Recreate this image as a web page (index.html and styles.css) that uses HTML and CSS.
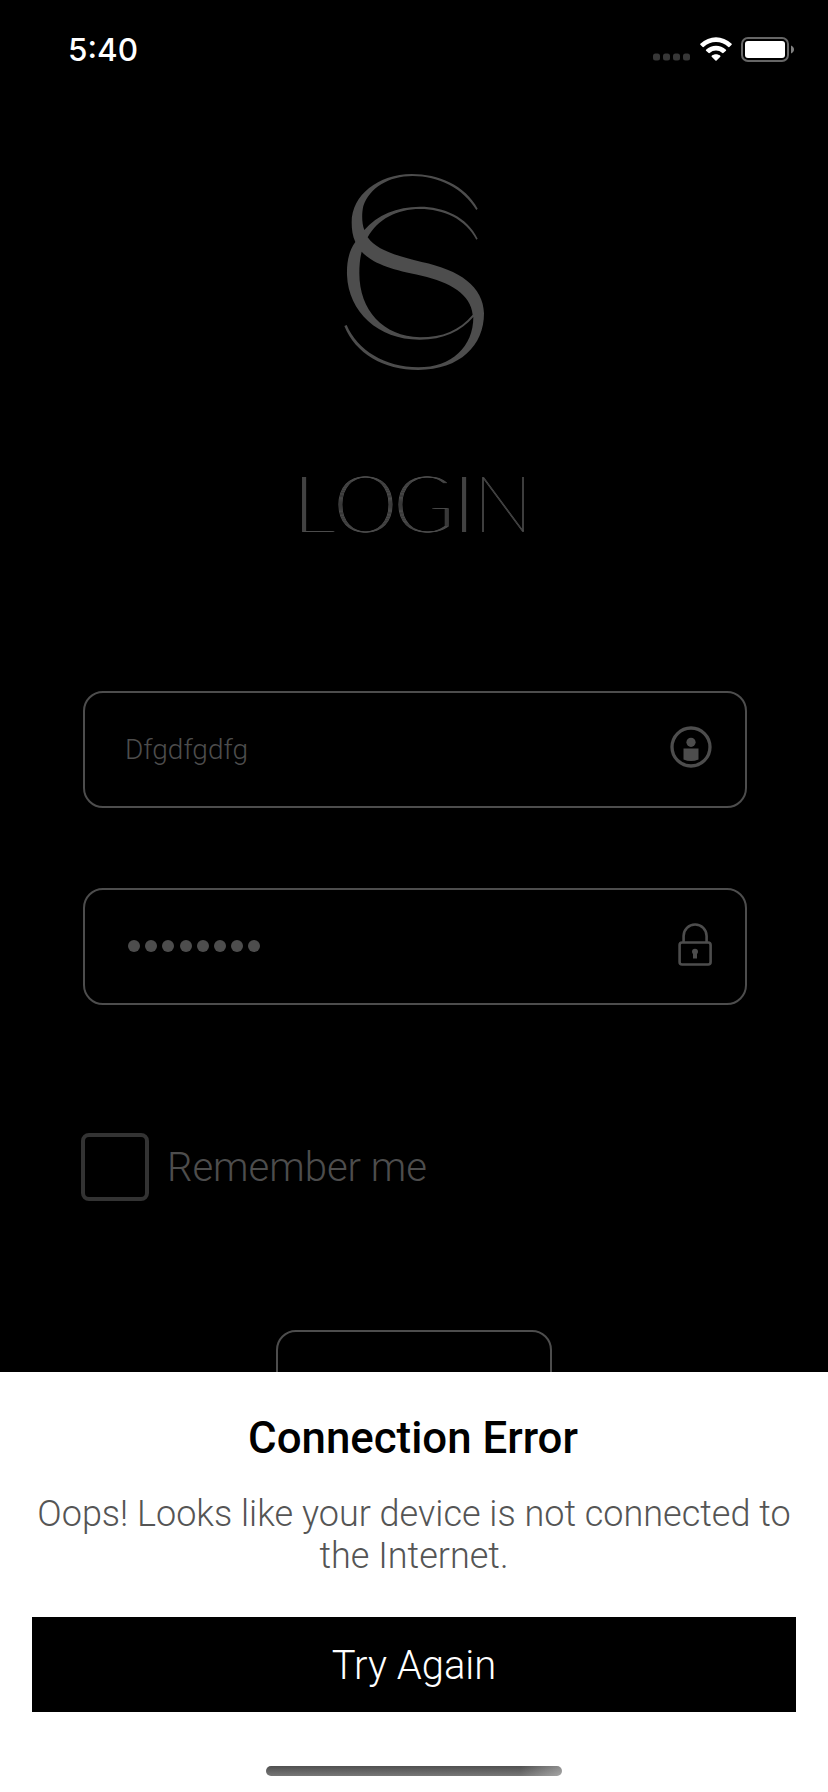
FILE: index.html
```html
<!DOCTYPE html>
<html lang="en">
<head>
<meta charset="utf-8">
<title>Login</title>
<link rel="stylesheet" href="styles.css">
</head>
<body>
<div class="screen">
  <header class="status">
    <span class="time">5:40</span>
    <div class="indicators">
      <svg class="cell" width="38" height="8" viewBox="0 0 38 8"><g fill="#373737"><rect width="7" height="7" x="0" y=".5" rx="2.5"/><rect width="7" height="7" x="10" y=".5" rx="2.5"/><rect width="7" height="7" x="20" y=".5" rx="2.5"/><rect width="7" height="7" x="30" y=".5" rx="2.5"/></g></svg>
      <svg class="wifi" width="32" height="24" viewBox="0 0 96 72"><g fill="#fff"><path d="M1 20C28-6 68-6 95 20Q96 21 95 23L88 30Q87 31 85 30C64 10 32 10 11 30Q9 31 8 30L1 23Q0 21 1 20Z"/><path d="M18 38C35 22 61 22 78 38Q79 39 78 41L70 48Q69 49 67 48C56 38 40 38 29 48Q27 49 26 48L18 41Q17 39 18 38Z"/><path d="M35 56C43 50 53 50 61 56Q62 57 61 59L49 71Q48 72 47 71L35 59Q34 57 35 56Z"/></g></svg>
      <svg class="battery" width="53" height="26" viewBox="0 0 53 26"><rect x="1" y="1" width="46" height="23" rx="6" fill="none" stroke="#666" stroke-width="2"/><rect x="4" y="4" width="40" height="17" rx="3" fill="#fff"/><path d="M50 8.500C54 10 54 15 50 16.500Z" fill="#808080"/></svg>
    </div>
  </header>
  <main class="login">
    <svg class="logo" width="170" height="220" viewBox="0 0 510 660" fill="#4d4d4d">
      <path d="M443 146C405 75 325 42 245 42C145 43 65 105 65 187C65 210 68 228 76 246C55 275 50 310 51 345C55 455 145 540 270 539C338 539 394 514 430 471C430 560 365 622 265 622C165 621 82 571 50 495L43 498C76 580 160 630 265 630C390 629 462 557 462 460C460 380 390 330 275 306C195 286 140 270 113 232C143 178 200 147 270 147C340 147 407 177 439 239L443 236C412 170 340 140 270 140C200 140 142 165 103 210C95 190 95 160 100 138C119 84 175 48 248 48C325 48 399 84 439 150ZM95 275C130 312 185 329 275 347C360 366 423 403 428 464C388 511 338 532 270 532C159 530 88 450 88 340C88 316 90 294 95 275Z" fill-rule="evenodd"/>
    </svg>
    <h1 class="title"><span class="l">L</span><span class="o">O</span><span class="g">G</span><span class="i">I</span><span class="n">N</span></h1>
    <div class="field">
      <span class="value">Dfgdfgdfg</span>
      <svg class="user" width="42" height="42" viewBox="0 0 42 42"><circle cx="21" cy="21" r="19" fill="none" stroke="#4d4d4d" stroke-width="3.300"/><circle cx="21" cy="16.300" r="4.600" fill="#4d4d4d"/><path d="M13.500 22.500H28.500V33.500Q21 36.500 13.500 33.500Z" fill="#4d4d4d"/></svg>
    </div>
    <div class="field">
      <div class="dots"><i></i><i></i><i></i><i></i><i></i><i></i><i></i><i></i></div>
      <svg class="lock" width="34" height="43" viewBox="0 0 34 43"><g fill="none" stroke="#4d4d4d" stroke-width="2.600"><rect x="1.600" y="19.500" width="31" height="22" rx="2.500"/><path d="M5.600 19V13A11.500 11.500 0 0 1 28.600 13V19"/></g><path d="M15 35.500V31Q14 30 14 28.800A3 3 0 0 1 20 28.800Q20 30 19 31V35.500Z" fill="#4d4d4d"/></svg>
    </div>
    <div class="remember"><span class="box"></span><span class="label">Remember me</span></div>
    <div class="submit"></div>
  </main>
  <section class="sheet">
    <h2 class="heading">Connection Error</h2>
    <p class="message">Oops! Looks like your device is not connected to the Internet.</p>
    <div class="retry">Try Again</div>
    <div class="home"></div>
  </section>
</div>
</body>
</html>
```
FILE: styles.css
```css
* { box-sizing: border-box; }
body { margin: 0; background: #000; font-family: Roboto, sans-serif; }
.screen { position: relative; width: 828px; height: 1792px; overflow: hidden; background: #000; }
.status { height: 100px; padding: 31px 34px 0 68px; display: flex; justify-content: space-between; align-items: flex-start; }
.time { font: 500 31.500px/38px Inter, sans-serif; color: #fff; }
.indicators { display: flex; align-items: flex-start; padding-top: 6px; }
.cell { margin: 16px 9px 0 0; }
.wifi { margin-right: 9px; }
.login { display: flex; flex-direction: column; align-items: center; padding: 60px 81px 0 83px; }
.logo { display: block; }
.title { display: flex; width: 250px; height: 100px; margin: 72px 0 0; padding-left: 3px; font: 100 79px/100px Lato, sans-serif; color: #4d4d4d; text-shadow: 1px 0 #4d4d4d, 2px 0 #4d4d4d, 3px 0 #4d4d4d; }
.title span { flex: none; }
.l { width: 40px; }
.o { width: 60px; }
.g { width: 60px; }
.i { width: 20px; }
.n { width: 67px; text-shadow: 1px 0 #4d4d4d; }
.field { width: 664px; height: 117px; border: 2px solid #4d4d4d; border-radius: 20px; display: flex; align-items: center; justify-content: space-between; padding: 0 33px 0 40px; }
.title + .field { margin-top: 139px; }
.field + .field { margin-top: 80px; }
.value { font-size: 28px; font-weight: 300; line-height: 34px; color: #4d4d4d; }
.user { margin-top: -6px; }
.dots { display: flex; gap: 5.200px; padding-left: 3px; margin-top: -1px; }
.dots i { width: 12px; height: 12px; border-radius: 50%; background: #4d4d4d; }
.lock { margin-top: -5px; }
.remember { align-self: flex-start; margin: 128px 0 0 -2px; display: flex; align-items: center; gap: 18px; }
.box { width: 68px; height: 68px; border: 4px solid #333; border-radius: 8px; }
.label { padding-top: 2px; font-size: 40px; font-weight: 300; line-height: 48px; color: #4d4d4d; }
.submit { width: 276px; height: 117px; margin: 129px 2px 0 0; border: 2px solid #4d4d4d; border-radius: 20px; }
.sheet { position: absolute; left: 0; right: 0; bottom: 0; height: 420px; padding: 40px 32px 16px; background: #fff; display: flex; flex-direction: column; align-items: center; }
.heading { margin: 0 2px 0 0; font-size: 43.800px; font-weight: 500; line-height: 52px; color: #000; }
.message { margin: 29px 0 0; font-size: 36px; font-weight: 300; line-height: 42px; color: #555; text-align: center; }
.retry { align-self: stretch; height: 95px; margin-top: 40px; padding-top: 1px; background: #000; color: #fff; font-size: 40px; font-weight: 300; line-height: 95px; text-align: center; }
.home { width: 296px; height: 10px; margin-top: auto; border-radius: 5px; background: linear-gradient(90deg, transparent 86%, rgba(255,255,255,.35)), linear-gradient(#505050, #777); }
```
